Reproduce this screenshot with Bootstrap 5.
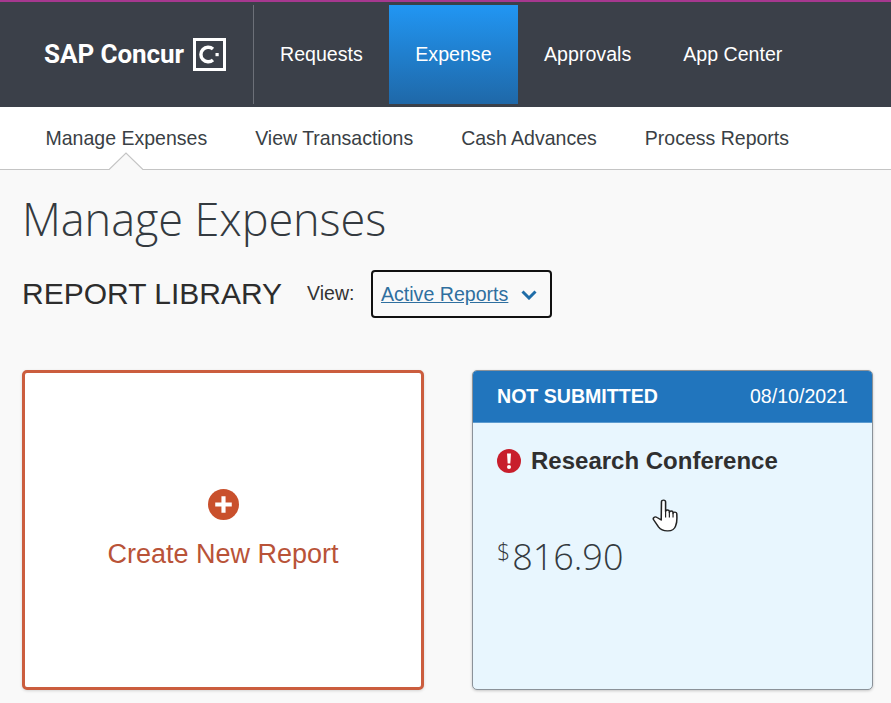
<!DOCTYPE html>
<html lang="en">
<head>
<meta charset="utf-8">
<title>Manage Expenses</title>
<link href="https://cdn.jsdelivr.net/npm/bootstrap@5.3.0/dist/css/bootstrap.min.css" rel="stylesheet">
<style>
html,body{height:703px;overflow:hidden}
body{background:#f9f9f9;font-family:"Liberation Sans",Arial,sans-serif;color:#333;position:relative}
.topbar{height:107px;background:#3b4049;border-top:2px solid #a6388f;padding-top:3px;padding-bottom:3px}
.brandbox{width:254px;height:99px;border-right:1px solid #6c7078;padding-left:44px;gap:9px}
.brandtext{font-family:"Roboto","Liberation Sans",sans-serif;font-weight:700;font-size:26px;color:#fff;letter-spacing:-.05px}
.mainlink{height:99px;padding:0 26px;font-size:19.6px;color:#fff;text-decoration:none}
.mainlink:hover{color:#fff}
.mainlink.current{background:linear-gradient(#2196f3,#1f68a8);padding:0 26.5px}
.subbar{height:63px;background:#fff;border-bottom:1px solid #c4c4c4;padding-left:21.5px}
.sublink{font-size:19.52px;color:#3a3f45;text-decoration:none;padding:2px 24px 0;position:relative;height:62px}
.sublink:hover{color:#3a3f45}
.notch{position:absolute;left:50%;bottom:-1px;margin-left:-17px;display:block}
.content{padding:0 18px 0 22px}
.pagetitle{font-family:"Open Sans",sans-serif;font-weight:300;font-size:45.1px;line-height:60px;color:#343a40;margin:19px 0 0;height:60px;letter-spacing:-.1px}
.librow{margin-top:21px;height:48px}
.libtitle{font-size:30px;font-weight:400;color:#2d2d2d;margin:0;line-height:48px}
.viewlabel{font-size:19.5px;color:#333;margin-left:25px;margin-right:17px}
.viewbtn{width:181px;height:48px;border:2px solid #111;border-radius:4px;padding:2px 0 0 7.5px;background:transparent;font-size:19.6px;color:#2f6f9f;gap:12.5px}
.viewbtn u{color:#2f6f9f}
.tiles{margin-top:52px;gap:48px}
.newtile{width:403px;height:320px;background:#fff;border:3px solid #cb5d3e;border-radius:5px;padding-top:116px;color:#b95338;box-shadow:0 1px 3px rgba(0,0,0,.15)}
.newlabel{font-size:27px;line-height:32px;margin-top:18px}
.rpt{width:402px;height:320px;background:#e8f6fe;border:1px solid #8b9299;border-radius:5px;overflow:hidden;box-shadow:0 1px 3px rgba(0,0,0,.2)}
.rpthead{height:52px;background:#2175bd;color:#fff;padding:0 24px;font-size:19.6px;border-bottom:1px solid #5c9bd0}
.rptstatus{font-weight:700;letter-spacing:-.02px}
.rptbody{padding:24px 24px 0}
.rptname{font-size:24px;font-weight:700;color:#2f2f2f;margin:0;line-height:28px;gap:10px}
.rptamount{font-family:"Open Sans",sans-serif;font-weight:300;font-size:36px;line-height:44px;color:#343a40;margin-top:60px}
.rptamount sup{font-size:23px;top:-.45em;margin-right:2px}
.handcursor{position:absolute;left:652px;top:499px;display:block}
</style>
</head>
<body>
<header class="topbar d-flex align-items-center">
  <div class="brandbox d-flex align-items-center">
    <span class="brandtext">SAP Concur</span>
    <svg width="33" height="33" viewBox="0 0 33 33" aria-hidden="true"><rect x="1.5" y="1.5" width="30" height="30" fill="none" stroke="#fff" stroke-width="3"/><path d="M20 11a7.300 7.300 0 1 0 0 11" fill="none" stroke="#fff" stroke-width="3.400"/><rect x="22.500" y="15" width="3.200" height="3.200" fill="#fff"/></svg>
  </div>
  <nav class="d-flex align-items-center">
    <a class="mainlink d-flex align-items-center" href="#">Requests</a>
    <a class="mainlink current d-flex align-items-center" href="#">Expense</a>
    <a class="mainlink d-flex align-items-center" href="#">Approvals</a>
    <a class="mainlink d-flex align-items-center" href="#">App Center</a>
  </nav>
</header>
<nav class="subbar d-flex align-items-stretch">
  <a class="sublink d-flex align-items-center" href="#">Manage Expenses
    <svg class="notch" width="34" height="18" viewBox="0 0 34 18" aria-hidden="true"><path d="M0 18 17 1l17 17z" fill="#f9f9f9"/><path d="M0 17.500 17 1l17 16.500" fill="none" stroke="#c4c4c4" stroke-width="1.200"/></svg>
  </a>
  <a class="sublink d-flex align-items-center" href="#">View Transactions</a>
  <a class="sublink d-flex align-items-center" href="#">Cash Advances</a>
  <a class="sublink d-flex align-items-center" href="#">Process Reports</a>
</nav>
<main class="content">
  <h1 class="pagetitle">Manage Expenses</h1>
  <div class="librow d-flex align-items-center">
    <h2 class="libtitle">REPORT LIBRARY</h2>
    <span class="viewlabel">View:</span>
    <button type="button" class="viewbtn d-flex align-items-center">
      <u>Active Reports</u>
      <svg width="16" height="10" viewBox="0 0 16 10" aria-hidden="true"><path d="M1.500 1.500 8 8l6.500-6.500" fill="none" stroke="#1f6da8" stroke-width="3"/></svg>
    </button>
  </div>
  <div class="tiles d-flex">
    <div class="newtile text-center">
      <svg class="d-block mx-auto" width="31" height="31" viewBox="0 0 30 30" aria-hidden="true"><circle cx="15" cy="15" r="15" fill="#c9502c"/><path d="M15 7v16M7 15h16" stroke="#fff" stroke-width="4"/></svg>
      <div class="newlabel">Create New Report</div>
    </div>
    <div class="rpt">
      <div class="rpthead d-flex align-items-center justify-content-between">
        <span class="rptstatus">NOT SUBMITTED</span>
        <span>08/10/2021</span>
      </div>
      <div class="rptbody">
        <h3 class="rptname d-flex align-items-center">
          <svg width="24" height="24" viewBox="0 0 24 24" aria-hidden="true"><circle cx="12" cy="12" r="12" fill="#c81e2c"/><path d="M10 4.500h4l-.7 10h-2.600z" fill="#fff"/><circle cx="12" cy="18" r="2" fill="#fff"/></svg>
          Research Conference
        </h3>
        <div class="rptamount"><sup>$</sup>816.90</div>
      </div>
    </div>
  </div>
</main>
<svg class="handcursor" width="26" height="34" viewBox="0 0 22 34" preserveAspectRatio="none" aria-hidden="true"><path d="M8 3c0-2.500 3.500-2.500 3.500 0v9.500c0-2 3-2 3.200 0v1c0-2 3-2 3.100 0v1c.2-2 3.100-1.700 3.200.3 0 5 .6 8-1 12-.8 3-3 5-6.500 5-3.500.2-6-1-8-4L1.500 21c-1.300-2 .8-4 2.800-2.500L7.800 21z" fill="#fff" stroke="#222" stroke-width="1.300" stroke-linejoin="round"/><path d="M11.500 12.500v6M14.700 13.500v5M17.800 14.500v4" fill="none" stroke="#222" stroke-width="1"/></svg>
<script src="https://cdn.jsdelivr.net/npm/bootstrap@5.3.0/dist/js/bootstrap.bundle.min.js"></script>
</body>
</html>
